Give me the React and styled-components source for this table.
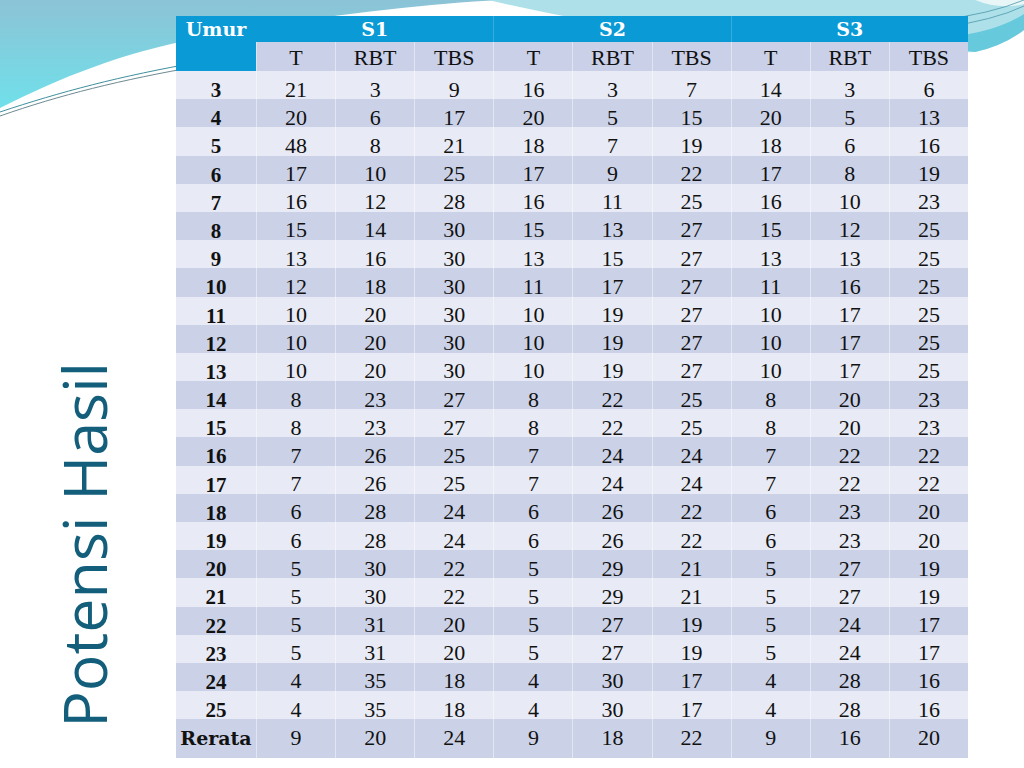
import React from "react";
import styled, { createGlobalStyle } from "styled-components";

const GlobalStyle = createGlobalStyle`
  html, body {
    margin: 0;
    padding: 0;
    background: #ffffff;
  }
`;

const Slide = styled.div`
  position: relative;
  width: 1024px;
  height: 768px;
  overflow: hidden;
  background: #ffffff;
  display: flex;
`;

const Backdrop = styled.svg`
  position: absolute;
  inset: 0;
  z-index: 0;
`;

const Side = styled.div`
  position: relative;
  z-index: 1;
  width: 176px;
  flex: none;
  display: flex;
  align-items: flex-end;
  box-sizing: border-box;
  padding: 0 0 40px 53px;
`;

const Title = styled.h1`
  margin: 0;
  writing-mode: vertical-rl;
  transform: rotate(180deg);
  font-family: "Open Sans", "Noto Sans", sans-serif;
  font-weight: 400;
  font-size: 61px;
  line-height: 61px;
  color: #125e7b;
  white-space: nowrap;
`;

const TableArea = styled.div`
  position: relative;
  z-index: 1;
  padding-top: 16px;
`;

const Grid = styled.div`
  display: grid;
  grid-template-columns: 80px repeat(9, 1fr);
  grid-template-rows: 26px 29px repeat(23, 28.2px) 39px;
  width: 792px;
`;

const tones = {
  head: "#0a9ad5",
  sub: "#c9d0e7",
  light: "#e8ebf5",
  dark: "#cbd2e8",
};

const Cell = styled.div`
  box-sizing: border-box;
  background: ${(p) => tones[p.$tone]};
  text-align: center;
  color: #111;
  font-family: "Liberation Serif", "Times New Roman", serif;
  font-size: 22px;
  line-height: 22px;
  padding-top: 7.5px;
  white-space: nowrap;
  border-left: ${(p) => (p.$first ? "none" : "1px solid rgba(255, 255, 255, 0.45)")};
  font-variant-numeric: oldstyle-nums;
`;

const HeadCell = styled(Cell)`
  color: #ffffff;
  font-family: "DejaVu Serif", serif;
  font-weight: 700;
  font-size: 19px;
  line-height: 19px;
  padding-top: 4px;
  grid-row: ${(p) => (p.$tall ? "span 2" : "auto")};
  grid-column: ${(p) => (p.$wide ? "span 3" : "auto")};
  border-left: ${(p) => (p.$first ? "none" : "1px solid rgba(255, 255, 255, 0.18)")};
`;

const SubCell = styled(Cell)`
  padding-top: 4.5px;
`;

const AgeCell = styled(Cell)`
  font-weight: 700;
  font-size: 21px;
  padding-top: 8px;
`;

const LabelCell = styled(Cell)`
  font-family: "DejaVu Serif", serif;
  font-weight: 700;
  font-size: 19px;
  line-height: 19px;
  padding-top: 10px;
`;

const same = (r, age) => [age, ...r.slice(1)];

const base = [
  [3, 21, 3, 9, 16, 3, 7, 14, 3, 6],
  [4, 20, 6, 17, 20, 5, 15, 20, 5, 13],
  [5, 48, 8, 21, 18, 7, 19, 18, 6, 16],
  [6, 17, 10, 25, 17, 9, 22, 17, 8, 19],
  [7, 16, 12, 28, 16, 11, 25, 16, 10, 23],
  [8, 15, 14, 30, 15, 13, 27, 15, 12, 25],
  [9, 13, 16, 30, 13, 15, 27, 13, 13, 25],
  [10, 12, 18, 30, 11, 17, 27, 11, 16, 25],
];

const r11 = [11, 10, 20, 30, 10, 19, 27, 10, 17, 25];
const r14 = [14, 8, 23, 27, 8, 22, 25, 8, 20, 23];
const r16 = [16, 7, 26, 25, 7, 24, 24, 7, 22, 22];
const r18 = [18, 6, 28, 24, 6, 26, 22, 6, 23, 20];
const r20 = [20, 5, 30, 22, 5, 29, 21, 5, 27, 19];
const r22 = [22, 5, 31, 20, 5, 27, 19, 5, 24, 17];
const r24 = [24, 4, 35, 18, 4, 30, 17, 4, 28, 16];

const rows = [
  ...base,
  r11,
  same(r11, 12),
  same(r11, 13),
  r14,
  same(r14, 15),
  r16,
  same(r16, 17),
  r18,
  same(r18, 19),
  r20,
  same(r20, 21),
  r22,
  same(r22, 23),
  r24,
  same(r24, 25),
];

const average = ["Rerata", 9, 20, 24, 9, 18, 22, 9, 16, 20];

const groups = ["S1", "S2", "S3"];
const subs = ["T", "RBT", "TBS"];

function Background() {
  return (
    <Backdrop width="1024" height="768" viewBox="0 0 1024 768">
      <defs>
        <linearGradient id="sky" x1="0" y1="0" x2="0" y2="1">
          <stop offset="0" stopColor="#8cc3d6" />
          <stop offset="1" stopColor="#70e0ea" />
        </linearGradient>
      </defs>
      <path
        d="M0,0 H500 C420,4 310,17 200,38 C120,53 60,78 0,108 Z"
        fill="url(#sky)"
      />
      <path d="M0,112 C60,92 120,76 200,62 C300,44 420,30 520,22" fill="none" stroke="#3f8f9e" strokeWidth="1" />
      <path d="M0,116 C60,95 120,80 200,66 C300,48 420,34 520,26" fill="none" stroke="#6d8a93" strokeWidth="1" />
      <path d="M488,0 Q760,62 975,52 Q1003,46 1024,30 V0 Z" fill="#ade0e9" />
      <path d="M930,38 Q990,36 1024,14 V30 Q1003,46 975,52 Q950,50 930,38 Z" fill="#66c9dc" />
      <path d="M975,0 Q1000,10 1024,4 V0 Z" fill="#e8f6f8" />
      <path d="M940,20 Q990,14 1024,0" fill="none" stroke="#4d98a8" strokeWidth="0.8" />
      <path d="M940,28 Q995,20 1024,6" fill="none" stroke="#4d98a8" strokeWidth="0.8" />
    </Backdrop>
  );
}

export default function App() {
  return (
    <>
      <GlobalStyle />
      <Slide>
        <Background />
        <Side>
          <Title>Potensi Hasil</Title>
        </Side>
        <TableArea>
          <Grid>
            <HeadCell $tone="head" $tall $first>
              Umur
            </HeadCell>
            {groups.map((g, i) => (
              <HeadCell key={g} $tone="head" $wide $first={i === 0}>
                {g}
              </HeadCell>
            ))}
            {groups.map((g) =>
              subs.map((s) => (
                <SubCell key={g + s} $tone="sub">
                  {s}
                </SubCell>
              ))
            )}
            {rows.map((row, ri) => {
              const tone = ri % 2 === 0 ? "light" : "dark";
              return row.map((v, ci) =>
                ci === 0 ? (
                  <AgeCell key={ri + "-" + ci} $tone={tone} $first>
                    {v}
                  </AgeCell>
                ) : (
                  <Cell key={ri + "-" + ci} $tone={tone}>
                    {v}
                  </Cell>
                )
              );
            })}
            {average.map((v, ci) =>
              ci === 0 ? (
                <LabelCell key={"avg" + ci} $tone="dark" $first>
                  {v}
                </LabelCell>
              ) : (
                <Cell key={"avg" + ci} $tone="dark">
                  {v}
                </Cell>
              )
            )}
          </Grid>
        </TableArea>
      </Slide>
    </>
  );
}
